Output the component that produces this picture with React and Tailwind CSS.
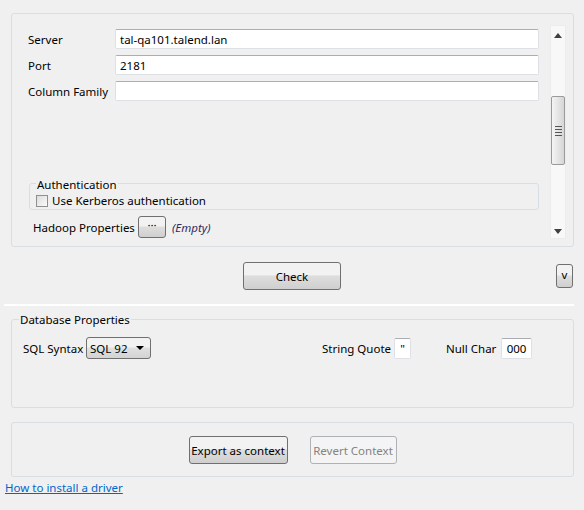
import React from "react";

const font = { fontFamily: '"Noto Sans", "Open Sans", sans-serif' };

const TextInput = ({ value, className = "" }) => (
  <div
    className={`h-[20px] bg-white border border-[#dde1e6] border-t-[#abadb3] rounded-[2px] flex items-center px-[4px] pt-[1px] text-[11.5px] text-black ${className}`}
  >
    {value}
  </div>
);

const WinButton = ({ children, className = "", disabled }) => (
  <button
    className={`flex items-center justify-center whitespace-nowrap rounded-[3px] border text-[11.5px] ${
      disabled
        ? "border-[#adb2b5] bg-[#f4f4f4] text-[#838383]"
        : "border-[#707070] bg-gradient-to-b from-[#f2f2f2] from-45% via-[#dedede] via-50% to-[#cfcfcf] text-black"
    } ${className}`}
  >
    {children}
  </button>
);

const Row = ({ label, value }) => (
  <div className="flex items-center h-[20px]">
    <span className="w-[87px] pt-[2px] text-[11.5px] text-black whitespace-nowrap">{label}</span>
    <TextInput value={value} className="w-[424px]" />
  </div>
);

const Scrollbar = () => (
  <div className="w-[16px] mt-[11px] mb-[7px] mr-[7px] bg-[#f8f8f8] border border-[#ececec] flex flex-col items-center">
    <svg width="8" height="5" viewBox="0 0 8 5" className="mt-[7px]">
      <path d="M4 0 L8 5 L0 5 Z" fill="#404040" />
    </svg>
    <div className="mt-[58px] w-[14px] h-[69px] rounded-[2px] border border-[#9a9a9a] bg-gradient-to-r from-[#f4f4f4] to-[#d6d6d6] flex flex-col items-center justify-center gap-[2px]">
      <div className="w-[7px] h-[1px] bg-[#555]" />
      <div className="w-[7px] h-[1px] bg-[#555]" />
      <div className="w-[7px] h-[1px] bg-[#555]" />
      <div className="w-[7px] h-[1px] bg-[#555]" />
    </div>
    <div className="flex-1" />
    <svg width="8" height="5" viewBox="0 0 8 5" className="mb-[4px]">
      <path d="M0 0 L8 0 L4 5 Z" fill="#404040" />
    </svg>
  </div>
);

const GroupLabel = ({ children, className = "" }) => (
  <span
    className={`absolute top-0 -translate-y-1/2 bg-[#f0f0f0] px-[1px] text-[11.5px] leading-[14px] text-black whitespace-nowrap ${className}`}
  >
    {children}
  </span>
);

export default function App() {
  return (
    <div className="w-[584px] h-[510px] bg-[#f0f0f0] overflow-hidden pt-[13px] text-[11.5px]" style={font}>
      {/* connection panel */}
      <div className="ml-[11px] w-[563px] h-[234px] border border-[#d5dfe5] rounded-[3px] flex">
        <div className="flex-1 pl-[16px] pt-[15px] flex flex-col">
          <div className="flex flex-col gap-[6px]">
            <Row label="Server" value="tal-qa101.talend.lan" />
            <Row label="Port" value="2181" />
            <Row label="Column Family" value="" />
          </div>
          <div className="relative mt-[82px] ml-[1px] w-[510px] h-[27px] border border-[#d5dfe5] rounded-[3px] pl-[6px] pt-[10px]">
            <GroupLabel className="left-[6px] mt-[1px]">Authentication</GroupLabel>
            <label className="flex items-center gap-[4px] text-black leading-[12px]">
              <span className="w-[12px] h-[12px] shrink-0 border border-[#8f8f8f] bg-gradient-to-br from-[#dcdcdc] to-[#fbfbfb]" />
              <span className="pt-[1px]">Use Kerberos authentication</span>
            </label>
          </div>
          <div className="flex items-center h-[22px] mt-[6px] ml-[5px] text-black">
            <span className="w-[105px] pt-[1px] whitespace-nowrap">Hadoop Properties</span>
            <WinButton className="w-[28px] h-[22px] text-[9px] leading-none pb-[4px]">···</WinButton>
            <span className="ml-[6px] pt-[1px] italic text-[#2e2a66]">(Empty)</span>
          </div>
        </div>
        <Scrollbar />
      </div>

      {/* check row */}
      <div className="grid grid-cols-[1fr_auto_1fr] items-center mt-[15px]">
        <div />
        <WinButton className="w-[98px] h-[28px] pt-[1px]">Check</WinButton>
        <div className="flex justify-end pr-[11px]">
          <WinButton className="w-[17px] h-[24px] pb-[2px]">v</WinButton>
        </div>
      </div>

      {/* separator */}
      <div className="mt-[14px] ml-[4px] w-[570px] h-[2px] bg-white" />

      {/* database properties */}
      <div className="relative mt-[13px] ml-[11px] w-[563px] h-[89px] border border-[#d5dfe5] rounded-[3px] pl-[11px] pt-[17px]">
        <GroupLabel className="left-[7px]">Database Properties</GroupLabel>
        <div className="flex items-center h-[22px] text-black">
          <span className="w-[63px] pt-[1px] whitespace-nowrap">SQL Syntax</span>
          <div className="w-[65px] h-[22px] rounded-[3px] border border-[#707070] bg-gradient-to-b from-[#f2f2f2] from-45% via-[#e0e0e0] via-50% to-[#d3d3d3] flex items-center pl-[3px] pr-[6px]">
            <span className="flex-1 pt-[1px]">SQL 92</span>
            <svg width="8" height="4" viewBox="0 0 8 4">
              <path d="M0 0 L8 0 L4 4 Z" fill="#000" />
            </svg>
          </div>
          <div className="w-[171px]" />
          <span className="w-[72px] pt-[1px] whitespace-nowrap">String Quote</span>
          <TextInput value={'"'} className="w-[17px] h-[21px] justify-center px-0" />
          <div className="w-[35px]" />
          <span className="w-[55px] pt-[1px] whitespace-nowrap">Null Char</span>
          <TextInput value="000" className="w-[31px] h-[21px] justify-center px-0" />
        </div>
      </div>

      {/* context buttons */}
      <div className="mt-[14px] ml-[11px] w-[563px] h-[55px] border border-[#d5dfe5] rounded-[3px] flex items-center justify-center gap-[22px]">
        <WinButton className="w-[99px] h-[28px] pt-[2px]">Export as context</WinButton>
        <WinButton className="w-[87px] h-[28px] pt-[2px]" disabled>Revert Context</WinButton>
      </div>

      <a className="block ml-[5px] mt-[3px] text-[#0066cc] underline leading-[16px] w-fit">How to install a driver</a>
    </div>
  );
}
